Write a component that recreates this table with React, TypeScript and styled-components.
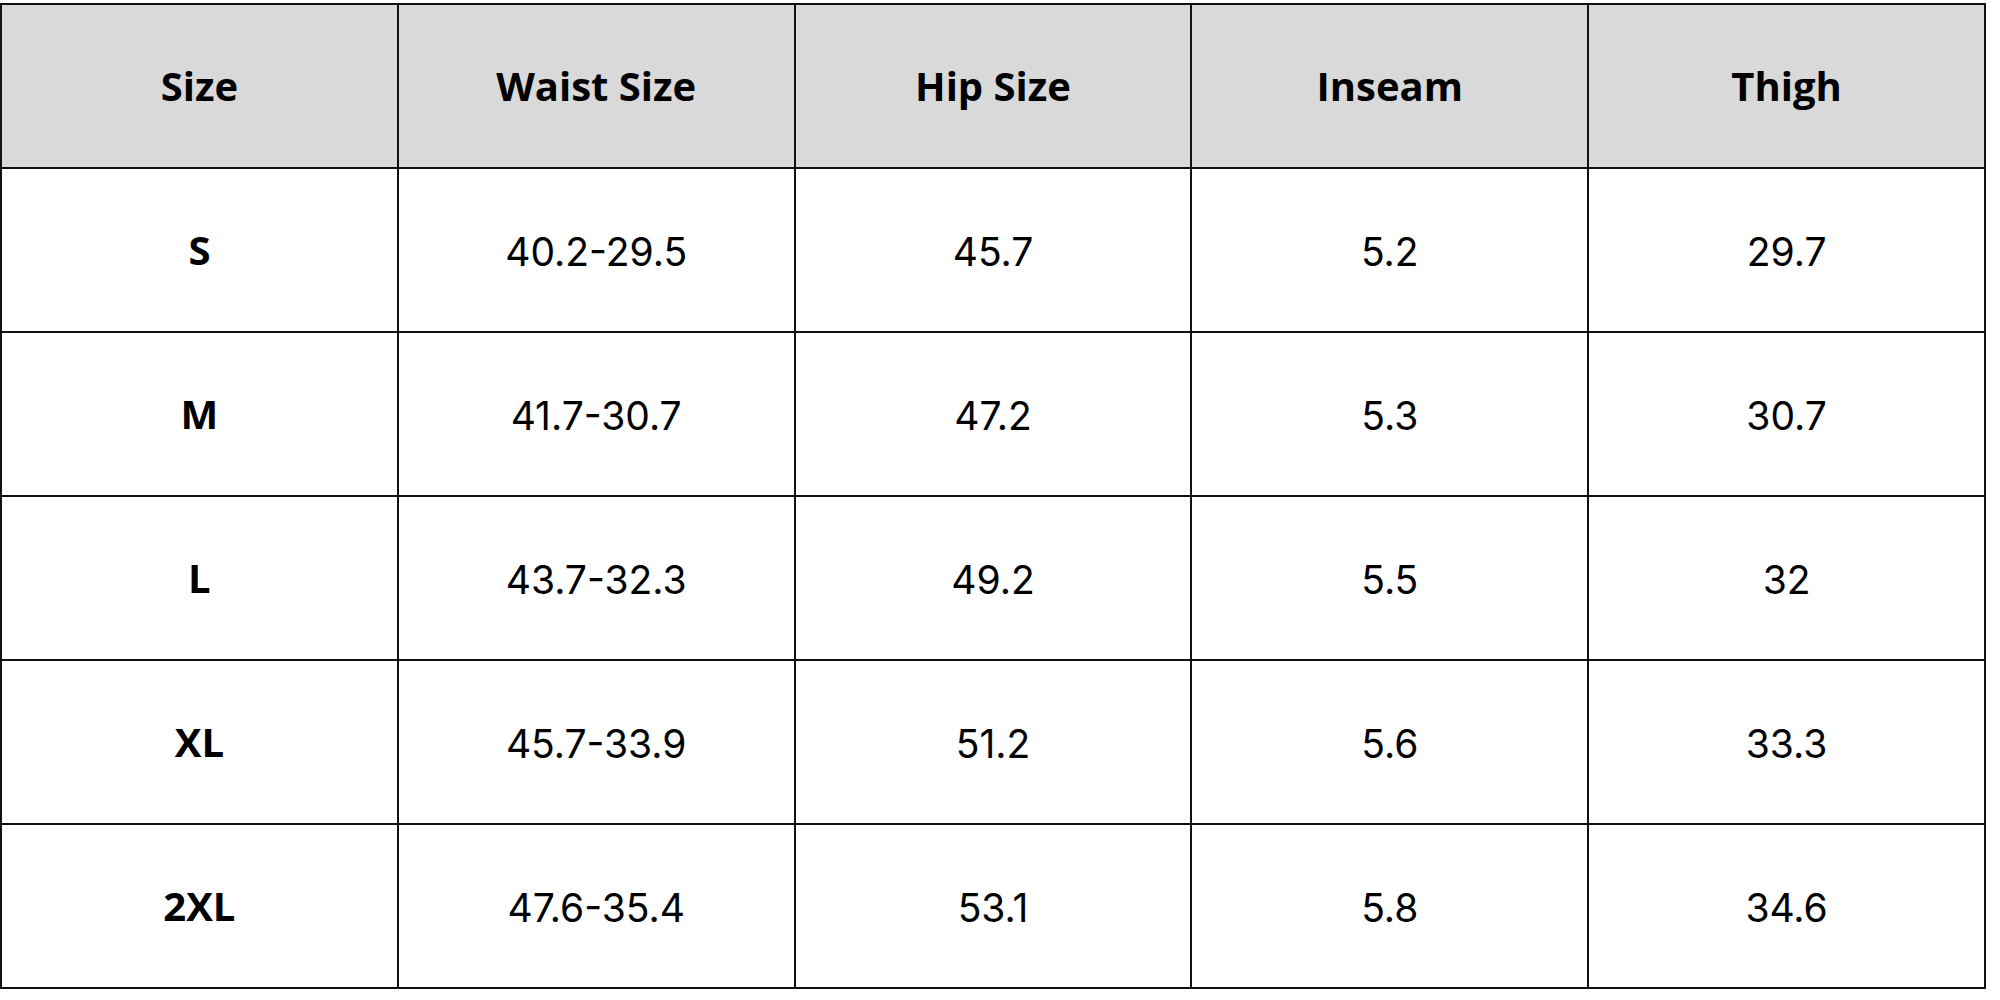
import React from "react";
import styled, { createGlobalStyle } from "styled-components";

const Global = createGlobalStyle`
  html, body { margin: 0; padding: 0; background: #ffffff; }
  body { font-family: "Open Sans", "Noto Sans", sans-serif; color: #000; }
`;

const Page = styled.div`
  padding-top: 3px;
  width: 2000px;
  height: 1000px;
  box-sizing: border-box;
`;

const Grid = styled.div`
  display: grid;
  grid-template-columns: repeat(5, 1fr);
  width: 1986px;
  box-sizing: border-box;
  border-top: 2px solid #111;
  border-left: 2px solid #111;
`;

const Cell = styled.div<{ $head?: boolean; $bold?: boolean }>`
  height: 164px;
  box-sizing: border-box;
  border-right: 2px solid #111;
  border-bottom: 2px solid #111;
  background: ${(p) => (p.$head ? "#d9d9d9" : "#ffffff")};
  display: flex;
  align-items: center;
  justify-content: center;
  padding: ${(p) => (p.$bold ? "0 0 2px" : "3px 0 0")};
  font-family: ${(p) =>
    p.$bold ? `"Open Sans", "Noto Sans", sans-serif` : `Inter, "Noto Sans", sans-serif`};
  font-size: ${(p) => (p.$bold ? "40px" : "39px")};
  font-weight: ${(p) => (p.$bold ? 700 : 400)};
  color: #000;
`;

const headers = ["Size", "Waist Size", "Hip Size", "Inseam", "Thigh"];
const rows = [
  ["S", "40.2-29.5", "45.7", "5.2", "29.7"],
  ["M", "41.7-30.7", "47.2", "5.3", "30.7"],
  ["L", "43.7-32.3", "49.2", "5.5", "32"],
  ["XL", "45.7-33.9", "51.2", "5.6", "33.3"],
  ["2XL", "47.6-35.4", "53.1", "5.8", "34.6"],
];

export default function App() {
  return (
    <>
      <Global />
      <Page>
        <Grid>
          {headers.map((h) => (
            <Cell key={h} $head $bold>
              {h}
            </Cell>
          ))}
          {rows.map((r) =>
            r.map((v, i) => (
              <Cell key={r[0] + i} $bold={i === 0}>
                {v}
              </Cell>
            ))
          )}
        </Grid>
      </Page>
    </>
  );
}
